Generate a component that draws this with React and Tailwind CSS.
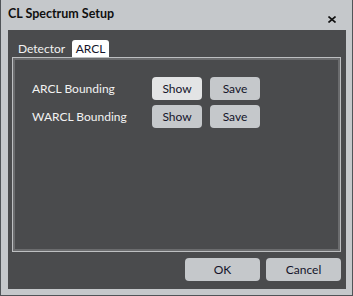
import React from 'react';

const font = { fontFamily: 'Lato, "Noto Sans", sans-serif' };

const Btn = ({ children, active, className = '' }) => (
    <button
        className={`h-[23px] rounded-[4px] text-[12px] text-[#14142a] leading-none ${active ? 'bg-[#e3e4e5]' : 'bg-[#c5c8cb]'} ${className}`}
    >
        {children}
    </button>
);

const Row = ({ label, active }) => (
    <div className="flex items-center h-[23px]">
        <span className="w-[120px] text-[12px] text-[#f2f2f2]">{label}</span>
        <div className="flex gap-[8px]">
            <Btn active={active} className="w-[50px]">Show</Btn>
            <Btn className="w-[50px]">Save</Btn>
        </div>
    </div>
);

export default function App() {
    return (
        <div
            className="w-[353px] h-[296px] bg-[#c5c8cb] border-x border-b border-[#505458] flex flex-col"
            style={font}
        >
            {/* Title bar */}
            <div className="h-[30px] flex items-start justify-between pl-[7px] pr-[16px]">
                <span className="mt-[5px] text-[12.5px] font-bold text-[#101010]">CL Spectrum Setup</span>
                <svg className="mt-[16px]" width="8" height="7" viewBox="0 0 8 7">
                    <path d="M0.5 0.5 L7.5 6.5 M7.5 0.5 L0.5 6.5" stroke="#111" strokeWidth="1.6" />
                </svg>
            </div>

            {/* Panel */}
            <div className="ml-[7px] mr-[6px] h-[259px] bg-[#4a4b4d] flex flex-col px-[4px]">
                {/* Tabs */}
                <div className="h-[27px] flex items-end pl-[1px]">
                    <div className="h-[17px] px-[5px] flex items-center text-[12px] text-[#f2f2f2] mr-[2px]">Detector</div>
                    <div className="h-[17px] w-[37px] bg-white rounded-t-[3px] flex items-center justify-center text-[12px] text-[#14142a]">ARCL</div>
                </div>

                {/* Group box */}
                <div className="mr-[1px] h-[195px] border border-[#bdbfc1]">
                    <div className="h-full border-2 border-[#6b6c6e] flex flex-col gap-[5px] pl-[17px] pt-[17px]">
                        <Row label="ARCL Bounding" active />
                        <Row label="WARCL Bounding" />
                    </div>
                </div>

                {/* Footer */}
                <div className="flex justify-end gap-[6px] pr-[1px] mt-[6px]">
                    <Btn className="w-[75px]">OK</Btn>
                    <Btn className="w-[75px]">Cancel</Btn>
                </div>
            </div>
        </div>
    );
}
